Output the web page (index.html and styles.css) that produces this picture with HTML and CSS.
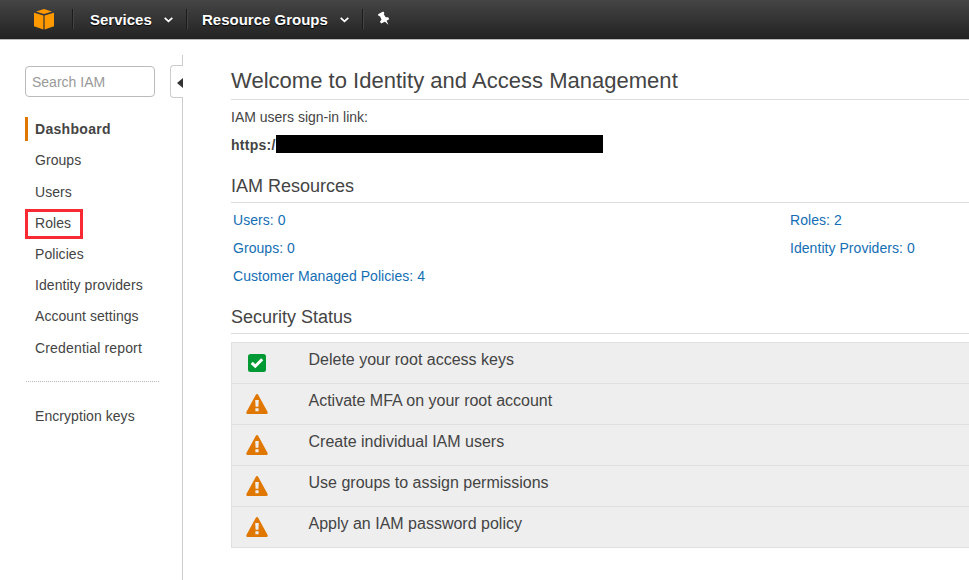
FILE: index.html
```html
<!DOCTYPE html>
<html lang="en">
<head>
<meta charset="utf-8">
<title>IAM Management Console</title>
<link rel="stylesheet" href="styles.css">
</head>
<body>
<svg class="defs" width="0" height="0">
  <symbol id="warning" viewBox="0 0 22 20">
    <path fill="#e07700" d="M11 0 Q11.8 0 12.3 1 L21.6 18 Q22 20 20.5 20 H1.5 Q0 20 .4 18 L9.7 1 Q10.2 0 11 0Z"/>
    <path fill="#eee" d="M9.2 6h3.6l-.4 6.8H9.6zM9.4 14.2h3.2v3H9.4z"/>
  </symbol>
  <symbol id="caret" viewBox="0 0 9 6">
    <path fill="none" stroke="#fff" stroke-width="1.8" d="M.7 .9 4.5 4.3 8.3 .9"/>
  </symbol>
</svg>
<header class="topbar">
  <a class="logo"><svg width="20" height="21" viewBox="0 0 20 21"><path fill="#f90" d="M10 0 18 2.6 10 5 2 2.6ZM0 3.8 9.4 6.5V20.4L0 17.3ZM20 3.8 10.6 6.5V20.4L20 17.3Z"/></svg></a>
  <a class="menu services"><span>Services</span><svg width="9" height="6"><use href="#caret"/></svg></a>
  <a class="menu resources"><span>Resource Groups</span><svg width="9" height="6"><use href="#caret"/></svg></a>
  <a class="pin"><svg width="13" height="15" viewBox="0 0 13 15"><path fill="#fff" d="M1 3.2 6.2.6 7.4 2 6.8 3.2 8.7 6.3 11.2 6.2 12.2 8.3 9.6 9.8 11.4 13.8 7.9 10.7 4 12.6 3 10.6 4.5 8.8 3 5.2 1.6 5Z"/></svg></a>
</header>
<div class="page">
  <aside class="sidebar">
    <input class="search" type="text" placeholder="Search IAM">
    <nav class="nav">
      <a class="active">Dashboard</a>
      <a>Groups</a>
      <a>Users</a>
      <a class="marked">Roles</a>
      <a>Policies</a>
      <a>Identity providers</a>
      <a>Account settings</a>
      <a class="report">Credential report</a>
    </nav>
    <nav class="nav extra"><a>Encryption keys</a></nav>
    <button class="collapse" aria-label="Collapse"><svg width="6" height="10" viewBox="0 0 6 10"><path fill="#333" d="M6 0V10L0 5Z"/></svg></button>
  </aside>
  <main class="main">
    <h1>Welcome to Identity and Access Management</h1>
    <p class="label">IAM users sign-in link:</p>
    <p class="link"><b>https:/</b><span class="redacted"></span></p>
    <h2>IAM Resources</h2>
    <div class="resources-grid">
      <a>Users: 0</a><a>Roles: 2</a>
      <a>Groups: 0</a><a>Identity Providers: 0</a>
      <a>Customer Managed Policies: 4</a>
    </div>
    <h2 class="security">Security Status</h2>
    <ul class="status">
      <li><svg width="22" height="20" viewBox="0 0 22 20"><rect x="2" y="1" width="18" height="18" rx="2.5" fill="#093"/><path fill="none" stroke="#fff" stroke-width="3" d="M5.7 9.8 9.3 13.2 16.2 6.2"/></svg><span>Delete your root access keys</span></li>
      <li><svg width="22" height="20"><use href="#warning"/></svg><span>Activate MFA on your root account</span></li>
      <li><svg width="22" height="20"><use href="#warning"/></svg><span>Create individual IAM users</span></li>
      <li><svg width="22" height="20"><use href="#warning"/></svg><span>Use groups to assign permissions</span></li>
      <li><svg width="22" height="20"><use href="#warning"/></svg><span>Apply an IAM password policy</span></li>
    </ul>
  </main>
</div>
</body>
</html>
```
FILE: styles.css
```css
*, *::before { box-sizing: border-box; }
body {
  margin: 0;
  height: 580px;
  overflow: hidden;
  background: #fff;
  color: #444;
  font: 14px/20px "Liberation Sans", Arial, sans-serif;
}
.defs { position: absolute; }
.topbar {
  display: flex;
  height: 40px;
  padding-top: 9px;
  background: linear-gradient(#454545, #222);
  border-bottom: 1px solid #bbb;
}
.topbar a {
  display: flex;
  height: 20px;
  align-items: center;
}
.logo { width: 72px; padding-left: 34px; }
.menu, .pin {
  border-left: 1px solid #1c1c1c;
  box-shadow: inset 1px 0 #444;
}
.menu {
  justify-content: space-between;
  color: #fff;
  font-size: 15px;
  font-weight: bold;
  text-shadow: 0 1px 1px #000;
}
.services { width: 114px; padding: 2px 13px 0 17px; }
.resources { width: 176px; padding: 2px 13px 0 15px; }
.topbar .pin { padding-left: 14px; padding-bottom: 1px; }
.page { display: flex; height: 540px; }
.sidebar {
  position: relative;
  width: 183px;
  margin-top: 15px;
  padding: 11px 24px 0 25px;
  border-right: 1px solid #ccc;
}
.search {
  display: block;
  width: 130px;
  height: 31px;
  padding: 0 6px;
  border: 1px solid #bbb;
  border-radius: 4px;
  font: inherit;
}
.search::placeholder { color: #999; opacity: 1; }
.nav { display: flex; flex-direction: column; margin-top: 20.2px; gap: 7.2px; }
.nav a { position: relative; height: 24px; padding-left: 10px; line-height: 24px; white-space: nowrap; letter-spacing: .06px; }
.nav .active { border-left: 3px solid #e07700; padding-left: 7px; font-weight: bold; letter-spacing: .3px; }
.nav .report { letter-spacing: .16px; }
.marked::before {
  content: "";
  position: absolute;
  inset: -2px auto auto 0;
  width: 58px;
  height: 30px;
  border: 3px solid #fa2a35;
}
.extra { width: 133px; margin: 21.4px 0 0 1px; padding-top: 22px; border-top: 1px dotted #bbb; }
.extra a { padding-left: 9px; }
.collapse {
  position: absolute;
  top: 10px;
  right: -1px;
  width: 13px;
  height: 33px;
  padding: 2px 0 0;
  display: flex;
  align-items: center;
  justify-content: flex-end;
  border: 1px solid #ccc;
  border-right: 0;
  border-radius: 4px 0 0 4px;
  background: #fff;
}
.main { flex: 1; margin-left: 48px; }
h1, h2 { margin: 0; font-weight: normal; border-bottom: 1px solid #ddd; }
h1 { height: 60px; padding-top: 26px; font-size: 22px; line-height: 30px; letter-spacing: .02px; }
h2 { height: 34px; padding-top: 5px; font-size: 18px; line-height: 24px; }
.label { margin: 7px 0 0; }
.link { display: flex; margin: 8px 0 14px; height: 20px; line-height: 20px; }
.link b { width: 45px; letter-spacing: .25px; }
.redacted { width: 327px; height: 18px; background: #000; }
.resources-grid {
  display: grid;
  grid-template-columns: 557px 1fr;
  grid-auto-rows: 28px;
  padding: 3px 0 0 2px;
  line-height: 28px;
  letter-spacing: .05px;
  color: #146eb4;
}
.security { margin-top: 10px; }
.status {
  margin: 8px 0 0;
  padding: 0;
  list-style: none;
  background: #eee;
  border: 1px solid #e0e0e0;
  border-right: 0;
}
.status li { display: flex; height: 41px; padding: 9px 0 0 14px; gap: 40.5px; font-size: 16px; }
.status li:first-child { height: 40px; padding-top: 10px; }
.status li + li { border-top: 1px solid #e0e0e0; }
.status span { line-height: 20px; margin-top: -3px; }
.status li + li { padding-top: 10px; }
```
